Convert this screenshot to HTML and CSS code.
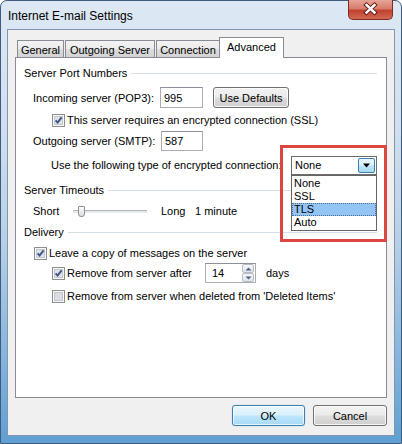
FILE: index.html
```html
<!DOCTYPE html>
<html>
<head>
<meta charset="utf-8">
<link rel="stylesheet" href="styles.css">
</head>
<body>
<div class="window">
  <div class="titlebar">
    <span class="title">Internet E-mail Settings</span>
    <div class="close">
      <svg width="45" height="20" viewBox="0 0 45 20"><path d="M18.5 6 L26.5 13.5 M26.5 6 L18.5 13.5" stroke="#5b1d16" stroke-width="4.4" stroke-linecap="square"/><path d="M18.5 6 L26.5 13.5 M26.5 6 L18.5 13.5" stroke="#fff" stroke-width="2.4" stroke-linecap="square"/></svg>
    </div>
  </div>
  <div class="client">
    <div class="tabs">
      <div class="tab t-general">General</div>
      <div class="tab t-outgoing">Outgoing Server</div>
      <div class="tab t-connection">Connection</div>
      <div class="tab active t-advanced">Advanced</div>
    </div>
    <div class="panel">
      <div class="group g1"><span>Server Port Numbers</span><i class="rule"></i></div>
      <div class="row r1">
        <span class="lbl lbl-pop">Incoming server (POP3):</span>
        <div class="input in-pop">995</div>
        <div class="btn btn-def">Use Defaults</div>
      </div>
      <div class="row r2 ind2">
        <span class="cb"><svg width="13" height="13" viewBox="0 0 13 13"><rect x="0.5" y="0.5" width="12" height="12" fill="#f7f7f7" stroke="#8e8f8f"/><rect x="2.5" y="2.5" width="8" height="8" fill="#dfe3e8" stroke="#c3c8cf"/><path d="M3.6 6.4 L5.6 8.6 L9.6 3.4" fill="none" stroke="#3d5286" stroke-width="1.9"/></svg></span>
        <span>This server requires an encrypted connection (SSL)</span>
      </div>
      <div class="row r3">
        <span class="lbl lbl-smtp">Outgoing server (SMTP):</span>
        <div class="input in-smtp">587</div>
      </div>
      <div class="row r4">
        <span class="lbl lbl-enc">Use the following type of encrypted connection:</span>
        <div class="select">
          <span class="sel-text">None</span>
          <span class="sel-btn"><svg width="9" height="5" viewBox="0 0 9 5"><path d="M1 0.5 H8 L4.5 4.5 Z" fill="#000"/></svg></span>
          <div class="list">
            <div class="opt">None</div>
            <div class="opt">SSL</div>
            <div class="opt sel">TLS</div>
            <div class="opt">Auto</div>
          </div>
        </div>
      </div>
      <div class="group g2"><span>Server Timeouts</span><i class="rule"></i></div>
      <div class="row r5">
        <span class="lbl lbl-short">Short</span>
        <div class="slider"><i class="track"></i><i class="thumb"></i></div>
        <span class="lbl lbl-long">Long</span>
        <span>1 minute</span>
      </div>
      <div class="group g3"><span>Delivery</span><i class="rule"></i></div>
      <div class="row r6 ind1">
        <span class="cb"><svg width="13" height="13" viewBox="0 0 13 13"><rect x="0.5" y="0.5" width="12" height="12" fill="#f7f7f7" stroke="#8e8f8f"/><rect x="2.5" y="2.5" width="8" height="8" fill="#dfe3e8" stroke="#c3c8cf"/><path d="M3.6 6.4 L5.6 8.6 L9.6 3.4" fill="none" stroke="#3d5286" stroke-width="1.9"/></svg></span>
        <span>Leave a copy of messages on the server</span>
      </div>
      <div class="row r7 ind2">
        <span class="cb"><svg width="13" height="13" viewBox="0 0 13 13"><rect x="0.5" y="0.5" width="12" height="12" fill="#f7f7f7" stroke="#8e8f8f"/><rect x="2.5" y="2.5" width="8" height="8" fill="#dfe3e8" stroke="#c3c8cf"/><path d="M3.6 6.4 L5.6 8.6 L9.6 3.4" fill="none" stroke="#3d5286" stroke-width="1.9"/></svg></span>
        <span class="lbl lbl-after">Remove from server after</span>
        <div class="spin">
          <span class="spin-text">14</span>
          <span class="spin-btns">
            <span class="sb"><svg width="7" height="4" viewBox="0 0 7 4"><path d="M0.5 3.5 H6.5 L3.5 0.5 Z" fill="#4d6185"/></svg></span>
            <span class="sb"><svg width="7" height="4" viewBox="0 0 7 4"><path d="M0.5 0.5 H6.5 L3.5 3.5 Z" fill="#4d6185"/></svg></span>
          </span>
        </div>
        <span class="days">days</span>
      </div>
      <div class="row r8 ind2">
        <span class="cb"><svg width="13" height="13" viewBox="0 0 13 13"><rect x="0.5" y="0.5" width="12" height="12" fill="#f7f7f7" stroke="#8e8f8f"/><rect x="2.5" y="2.5" width="8" height="8" fill="#dadde2" stroke="#c3c8cf"/></svg></span>
        <span>Remove from server when deleted from 'Deleted Items'</span>
      </div>
      <div class="redbox"></div>
    </div>
    <div class="footer">
      <div class="btn btn-ok">OK</div>
      <div class="btn btn-cancel">Cancel</div>
    </div>
  </div>
</div>
</body>
</html>
```
FILE: styles.css
```css
html, body {
  margin: 0;
  padding: 0;
}
body {
  width: 402px;
  height: 444px;
  overflow: hidden;
  font-family: "Liberation Sans", Arial, sans-serif;
  font-size: 11px;
  line-height: 16px;
  color: #000;
  background: #fff;
  white-space: nowrap;
}
.window {
  box-sizing: border-box;
  height: 444px;
  border: 1px solid #3f5c7c;
  border-radius: 7px 7px 0 0;
  background: linear-gradient(180deg, #dde8f4 0%, #cfdfef 30%, #b6cfe7 55%, #86b5dd 80%, #5f9fd3 100%);
  padding: 0 6px 7px;
  display: flex;
  flex-direction: column;
}
.titlebar {
  height: 28px;
  position: relative;
  display: flex;
  align-items: center;
}
.title {
  margin-left: 1px;
  padding-top: 1px;
  font-size: 12px;
}
.close {
  position: absolute;
  right: 2px;
  top: -1px;
  width: 45px;
  height: 20px;
  box-sizing: border-box;
  border: 1px solid #7e2b22;
  border-top: none;
  border-radius: 0 0 5px 5px;
  background: linear-gradient(180deg, #e6a598 0%, #d87b6a 45%, #c3402e 55%, #cf6a55 100%);
}
.close svg {
  display: block;
  margin: -1px 0 0 -1px;
}
.client {
  flex: 1;
  border: 1px solid #8196ad;
  background: #f0f0f0;
  padding: 0 7px;
  display: flex;
  flex-direction: column;
}
.tabs {
  margin-top: 7px;
  height: 20px;
  padding-left: 2px;
  display: flex;
  align-items: flex-end;
  position: relative;
  z-index: 1;
}
.tab {
  box-sizing: border-box;
  height: 17px;
  border: 1px solid #898c95;
  border-bottom: none;
  background: linear-gradient(180deg, #f3f3f3 0%, #ebebeb 50%, #dddddd 51%, #d3d3d3 100%);
  display: flex;
  align-items: center;
  justify-content: center;
  margin-right: 1px;
  padding-top: 1px;
}
.t-general { width: 47px; }
.t-outgoing { width: 90px; }
.t-connection { width: 64px; }
.tab.active {
  height: 21px;
  width: 65px;
  margin-left: -2px;
  margin-bottom: -1px;
  background: #fff;
  padding-top: 0;
  padding-bottom: 3px;
}
.panel {
  box-sizing: border-box;
  height: 341px;
  border: 1px solid #898c95;
  background: #fff;
  position: relative;
  padding: 0 9px 0 8px;
  display: flex;
  flex-direction: column;
}
.group {
  display: flex;
  align-items: center;
  height: 16px;
}
.rule {
  flex: 1;
  height: 1px;
  background: #d5dfe5;
  margin-left: 4px;
}
.g1 { margin-top: 7px; }
.g2 { margin-top: 7px; }
.g3 { margin-top: 3px; }
.row {
  display: flex;
  align-items: center;
  height: 20px;
  padding-left: 9px;
}
.row.ind1 { padding-left: 10px; }
.row.ind2 { padding-left: 28px; }
.r1 { margin-top: 6px; height: 21px; }
.r2 { margin-top: 2px; }
.r3 { margin-top: 1px; }
.r4 { margin-top: 4px; }
.r5 { margin-top: 3px; }
.r6 { margin-top: 3px; }
.r7 { margin-top: 0; }
.r8 { margin-top: 3px; }
.lbl { flex: none; }
.lbl-pop { width: 127px; }
.lbl-smtp { width: 128px; }
.lbl-enc { width: 258px; padding-left: 18px; box-sizing: border-box; }
.lbl-short { width: 40px; }
.lbl-long { width: 34px; margin-left: 14px; }
.lbl-after { width: 138px; }
.cb {
  width: 13px;
  height: 13px;
  flex: none;
  margin-right: 2px;
}
.cb svg { display: block; }
.input {
  box-sizing: border-box;
  height: 21px;
  border: 1px solid #abadb3;
  border-top-color: #8e9099;
  background: #fff;
  padding-left: 3px;
  display: flex;
  align-items: center;
}
.in-pop { width: 43px; height: 21px; }
.in-smtp { width: 42px; height: 20px; }
.btn {
  box-sizing: border-box;
  height: 21px;
  border: 1px solid #707070;
  border-radius: 3px;
  background: linear-gradient(180deg, #f2f2f2 0%, #ebebeb 48%, #dddddd 52%, #cfcfcf 100%);
  box-shadow: inset 0 0 0 1px rgba(255,255,255,0.8);
  display: flex;
  align-items: center;
  justify-content: center;
}
.btn-def {
  width: 76px;
  margin-left: 10px;
}
.select {
  position: relative;
  box-sizing: border-box;
  width: 87px;
  height: 19px;
  border: 1px solid #6d6d6d;
  background: #fff;
  display: flex;
  align-items: center;
  justify-content: space-between;
}
.sel-text {
  padding-left: 3px;
}
.sel-btn {
  box-sizing: border-box;
  width: 17px;
  height: 15px;
  margin-right: 1px;
  border: 1px solid #3c7fb1;
  border-radius: 2px;
  background: linear-gradient(180deg, #eaf6fd 0%, #d9f0fc 48%, #bee6fd 52%, #a7d9f5 100%);
  display: flex;
  align-items: center;
  justify-content: center;
}
.sel-btn svg { display: block; }
.list {
  position: absolute;
  left: -1px;
  top: 18px;
  width: 86px;
  box-sizing: border-box;
  border: 1px solid #646464;
  background: #fff;
  padding: 1px 0;
  z-index: 2;
}
.opt {
  height: 13px;
  line-height: 13px;
  padding-left: 2px;
}
.opt.sel {
  background: #93c4f4;
  outline: 1px dotted #4a6d94;
  outline-offset: -1px;
}
.slider {
  position: relative;
  width: 74px;
  height: 20px;
  flex: none;
}
.track {
  position: absolute;
  left: 0;
  right: 0;
  top: 9px;
  height: 2px;
  border-top: 1px solid #b0b3b8;
  border-bottom: 1px solid #fff;
  background: #e7eaea;
}
.thumb {
  position: absolute;
  left: 5px;
  top: 5px;
  width: 5px;
  height: 9px;
  border: 1px solid #8b8f95;
  border-radius: 1px 1px 3px 3px;
  background: linear-gradient(180deg, #fbfbfb, #dcdcdc);
}
.spin {
  box-sizing: border-box;
  width: 51px;
  height: 20px;
  border: 1px solid #abadb3;
  border-top-color: #8e9099;
  background: #fff;
  display: flex;
  align-items: center;
  justify-content: space-between;
}
.spin-text { padding-left: 6px; }
.spin-btns {
  display: flex;
  flex-direction: column;
  width: 12px;
  height: 18px;
  margin-right: 1px;
}
.sb {
  flex: 1;
  box-sizing: border-box;
  border: 1px solid #b6bcc6;
  border-radius: 2px;
  background: linear-gradient(180deg, #f7f8fa, #dfe3ea);
  display: flex;
  align-items: center;
  justify-content: center;
}
.sb svg { display: block; }
.days { margin-left: 10px; }
.redbox {
  position: absolute;
  left: 264px;
  top: 87px;
  width: 107px;
  height: 97px;
  box-sizing: border-box;
  border: 3px solid #dc4640;
  z-index: 3;
  pointer-events: none;
}
.footer {
  display: flex;
  justify-content: flex-end;
  gap: 8px;
  margin-top: 7px;
}
.btn-ok {
  width: 73px;
  border-color: #3c7fb1;
  background: linear-gradient(180deg, #eaf6fd 0%, #d9f0fc 48%, #bee6fd 52%, #a7d9f5 100%);
  box-shadow: inset 0 0 0 1px rgba(255,255,255,0.7), 0 0 1px #6ab8e8;
}
.btn-cancel { width: 74px; }
```
